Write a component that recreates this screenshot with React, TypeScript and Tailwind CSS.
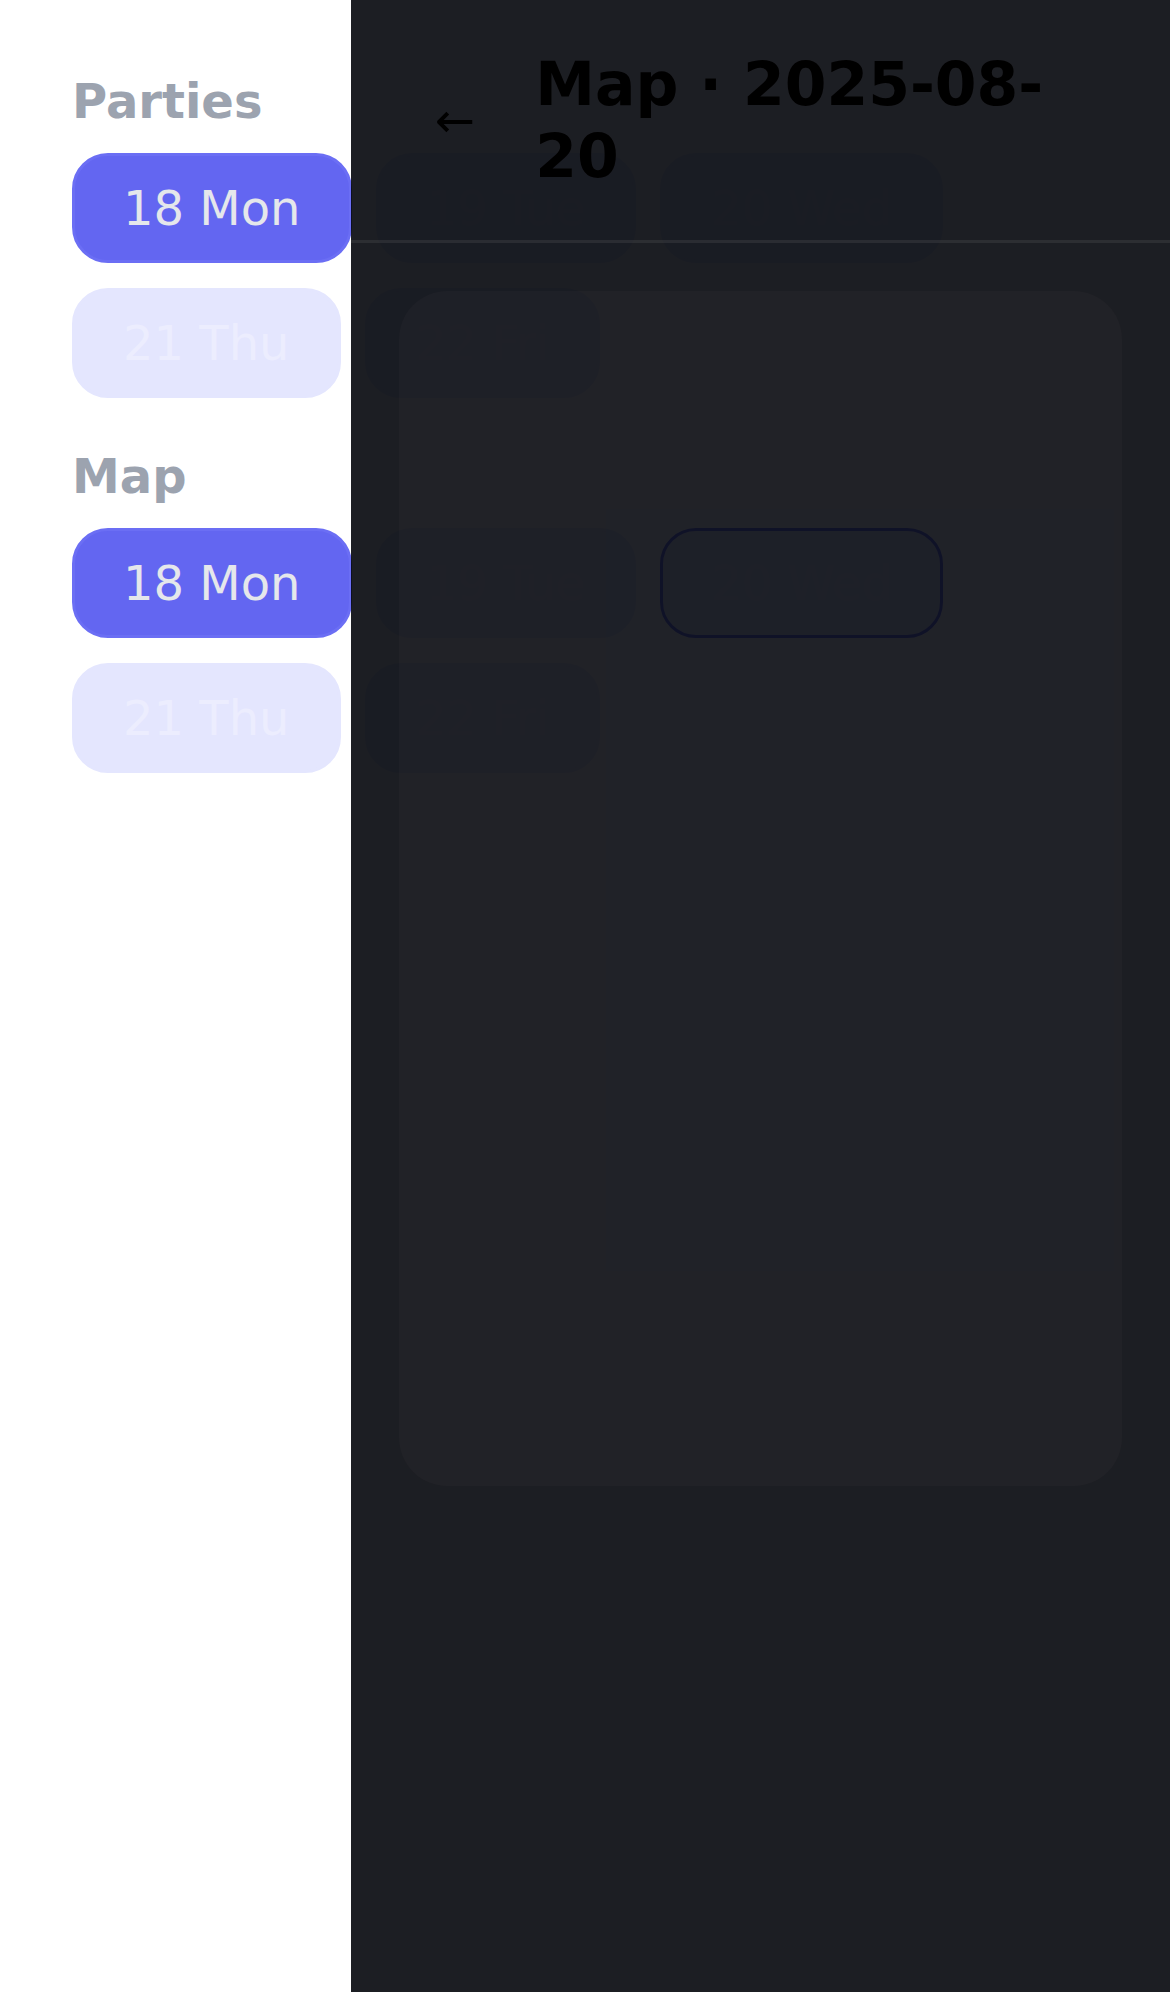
import React from "react";

const days = ["18 Mon", "19 Tue", "20 Wed", "21 Thu", "22 Fri"];

const pillBase =
  "rounded-[36px] border-[3px] px-[48px] py-[16px] text-[48px] leading-[72px]";
const pillActive = "bg-[#6366f1] border-[#6b6ef4] text-[#e5e7eb]";
const pillIdle = "bg-[#e4e6fe] border-[#e4e6fe] text-[#ecedfe]";
const pillMarked = "bg-[#e4e6fe] border-[#6366f1] text-[#ecedfe]";

function DaySection({
  title,
  active,
  marked,
}: {
  title: string;
  active: string;
  marked?: string;
}) {
  return (
    <section>
      <h2 className="mb-[24px] text-[48px] font-bold leading-[56px] text-[#9ca3af]">
        {title}
      </h2>
      <div className="flex flex-wrap gap-x-[24px] gap-y-[25px]">
        {days.map((d) => {
          const cls =
            d === active ? pillActive : d === marked ? pillMarked : pillIdle;
          return (
            <button key={d} className={`${pillBase} ${cls}`}>
              {d}
            </button>
          );
        })}
      </div>
    </section>
  );
}

export default function App() {
  return (
    <div className="relative min-h-screen bg-white font-['DejaVu_Sans',sans-serif]">
      {/* page under the drawer */}
      <div className="flex flex-col gap-[50px] px-[72px] pt-[73px]">
        <DaySection title="Parties" active="18 Mon" />
        <DaySection title="Map" active="18 Mon" marked="20 Wed" />
      </div>

      {/* map drawer */}
      <div className="fixed inset-y-0 right-0 z-50 flex w-[819px] flex-col bg-[rgba(0,2,8,0.89)]">
        <header className="flex items-center gap-[24px] border-b-[3px] border-white/[0.07] px-[48px] py-[48px]">
          <button className="px-[36px] text-[48px] leading-[72px] text-black">
            ←
          </button>
          <h1 className="max-w-[570px] text-[60px] font-bold leading-[72px] text-black">
            Map · 2025-08-20
          </h1>
        </header>
        <div className="px-[48px] pt-[48px]">
          <div className="h-[60vh] rounded-[48px] bg-white/[0.02]" />
        </div>
      </div>
    </div>
  );
}
